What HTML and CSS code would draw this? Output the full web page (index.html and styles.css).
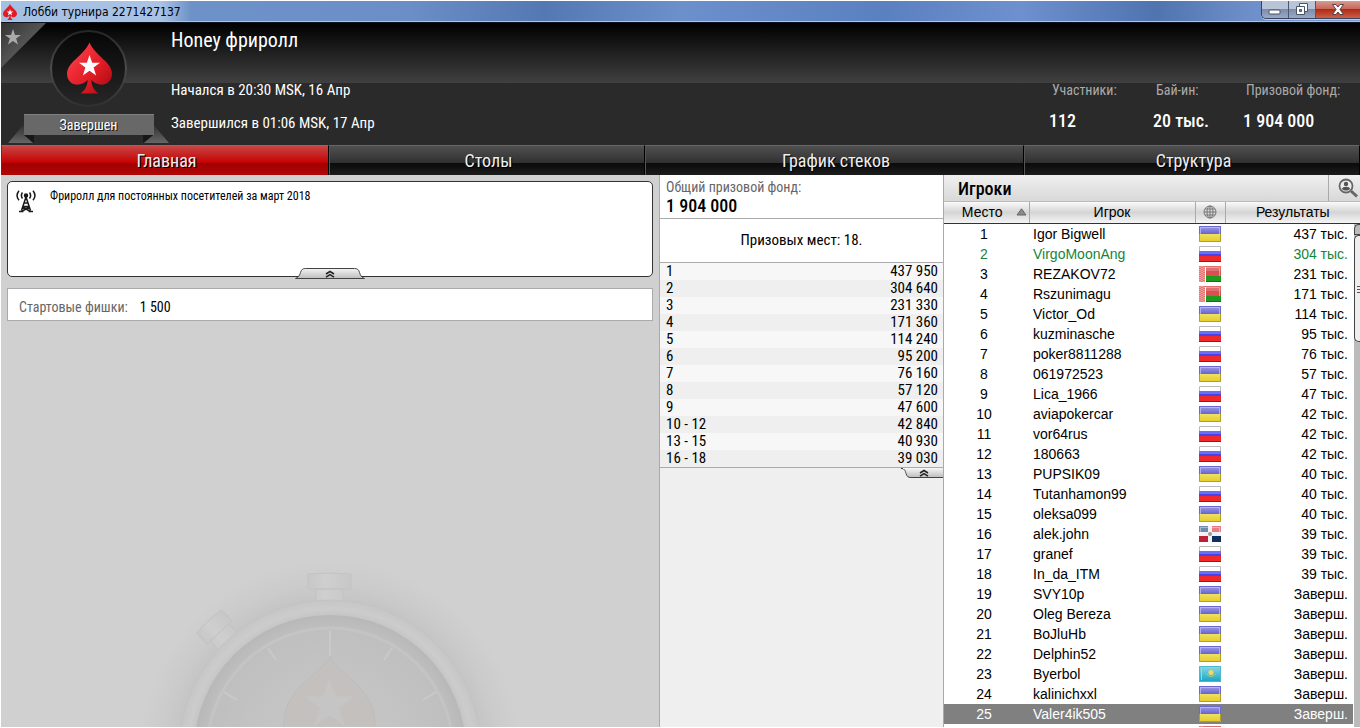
FILE: index.html
```html
<!DOCTYPE html>
<html lang="ru">
<head>
<meta charset="utf-8">
<title>Лобби турнира 2271427137</title>
<link rel="stylesheet" href="styles.css">
</head>
<body>
<svg class="defs" aria-hidden="true">
  <defs>
    <linearGradient id="gRed" x1="0" y1="0" x2="1" y2="1"><stop offset="0" stop-color="#ff7a6e"/><stop offset=".3" stop-color="#f0303a"/><stop offset=".6" stop-color="#e01b24"/><stop offset="1" stop-color="#a00910"/></linearGradient>
    <linearGradient id="gBlue" x1="0" y1="0" x2="0" y2="1"><stop offset="0" stop-color="#a09ee8"/><stop offset="1" stop-color="#6663cf"/></linearGradient>
    <linearGradient id="gYellow" x1="0" y1="0" x2="0" y2="1"><stop offset="0" stop-color="#efe067"/><stop offset="1" stop-color="#e3cb22"/></linearGradient>
    <linearGradient id="gSky" x1="0" y1="0" x2="0" y2="1"><stop offset="0" stop-color="#8fd8e6"/><stop offset="1" stop-color="#12a3c4"/></linearGradient>
    <symbol id="spade" viewBox="0 0 46 52"><path d="M23 0c3 7 9 12 14 17 6 5 9 10 9 15 0 6-4 11-10 11-5 0-9-2-11-5 0 6 2 10 7 14H14c5-4 7-8 7-14-2 3-6 5-11 5C4 43 0 38 0 32c0-5 3-10 9-15C14 12 20 7 23 0z"/></symbol>
    <symbol id="star" viewBox="0 0 20 20"><path d="M10 0l2.500 7.400H20l-6.100 4.500 2.400 7.600L10 14.900l-6.300 4.600 2.400-7.600L0 7.400h7.500z"/></symbol>
    <symbol id="ua" viewBox="0 0 22 16"><path fill="url(#gBlue)" d="M0 0h22v8H0z"/><path fill="url(#gYellow)" d="M0 8h22v8H0z"/><path fill="none" stroke="#6a67d0" d="M.5 8V.5h21V8"/><path fill="none" stroke="#b4a01c" d="M.5 8v7.500h21V8"/><path fill="none" stroke="#c6c5f2" stroke-opacity=".7" d="M1.500 8V1.500h19V8"/></symbol>
    <symbol id="ru" viewBox="0 0 22 16"><path fill="#fff" d="M0 0h22v5H0z"/><path fill="#6f6df5" d="M0 5h22v3H0z"/><path fill="#4543ec" d="M0 8h22v2H0z"/><path fill="#f02a2a" d="M0 10h22v5H0z"/><path fill="#b50d0d" d="M0 15h22v1H0z"/><path fill="none" stroke="#bbb" d="M.5 5V.5h21V5"/></symbol>
    <symbol id="by" viewBox="0 0 22 16"><path fill="#e07070" d="M0 0h22v10H0z"/><path fill="#d85050" d="M7 5h15v5H7z"/><path fill="#1f9a1f" d="M7 10h15v6H7z"/><path fill="#0d760d" d="M7 15h15v1H7z"/><path fill="#eda0a0" d="M0 0h6v16H0z"/><path stroke="#dc4a4a" stroke-dasharray="1 1" d="M1 0v16M3 1v15M5 0v16"/><path fill="#fff" d="M6 1h1v14H6z"/><path fill="none" stroke="#f0b5b5" stroke-opacity=".7" d="M7 1.500h13.500V10"/></symbol>
    <symbol id="do" viewBox="0 0 22 16"><path fill="#f2f2f2" d="M0 0h22v16H0z"/><path fill="#7288aa" d="M0 0h9v6H0z"/><path fill="#e77c88" d="M13 0h9v6h-9z"/><path fill="#bf2035" d="M0 10h9v6H0z"/><path fill="#0f3061" d="M13 10h9v6h-9z"/><circle cx="11" cy="8" r="2" fill="#9a9a9a"/><path fill="none" stroke="#fff" stroke-opacity=".4" d="M1.500 8V1.500h19V8"/></symbol>
    <symbol id="kz" viewBox="0 0 22 16"><path fill="url(#gSky)" d="M0 0h22v16H0z"/><path fill="#b8d48c" d="M2 2h1v12H2z"/><circle cx="12" cy="6.500" r="2.500" fill="#f5d860"/><path fill="none" stroke="#b9cf6e" d="M8 8c1 3 7 3 8 0"/><path fill="none" stroke="#4db7cb" d="M.5.500h21v15H.5z"/></symbol>
    <symbol id="chev" viewBox="0 0 10 8"><path fill="none" stroke="#222" stroke-width="1.500" d="M1 4l4-2.500L9 4M1 7.200l4-2.500 4 2.500"/></symbol>
    <linearGradient id="gHandle" x1="0" y1="0" x2="0" y2="1"><stop offset="0" stop-color="#f4f4f4"/><stop offset="1" stop-color="#bdbdbd"/></linearGradient>
  </defs>
</svg>
<div class="app">
  <div class="titlebar">
    <svg class="titlebar-icon" viewBox="0 0 46 52"><use href="#spade" fill="#e01b24"/><use href="#star" x="12" y="16" width="22" height="22" fill="#fff"/></svg>
    <span class="titlebar-text">Лобби турнира 2271427137</span>
    <div class="win-buttons">
      <button class="win-btn" aria-label="Свернуть"><svg width="14" height="6" viewBox="0 0 14 6"><rect x="1" y="1" width="11" height="4" rx="1" fill="#fff" stroke="#4b5563"/></svg></button>
      <button class="win-btn" aria-label="Развернуть"><svg width="12" height="13" viewBox="0 0 12 13"><path d="M3.500 3V.500h8v8H9" fill="#fff" stroke="#4b5568"/><path d="M.500 3.500h8v8h-8z" fill="#fff" stroke="#4b5568"/><path d="M3.500 6.500h2v2h-2z" fill="#7a8aa5" stroke="#4b5568"/></svg></button>
      <button class="win-btn win-close" aria-label="Закрыть"><svg width="12" height="11" viewBox="0 0 12 11"><path d="M.500.500h3.500l2 2.500 2-2.500h3.500L8 5.500l3.500 5H8L6 8l-2 2.500H.500L4 5.500z" fill="#fff" stroke="#5b4146"/></svg></button>
    </div>
  </div>

  <header class="header">
    <div class="brand">
      <svg class="brand-art" width="170" height="122" viewBox="1 23 170 122" aria-hidden="true">
        <defs>
          <linearGradient id="gCorner" x1="0" y1="0" x2="1" y2="1"><stop offset="0" stop-color="#333"/><stop offset=".5" stop-color="#555"/></linearGradient>
          <linearGradient id="gTail" x1="0" y1="0" x2="0" y2="1"><stop offset="0" stop-color="#2c2c2c"/><stop offset="1" stop-color="#666"/></linearGradient>
          <linearGradient id="gRing" x1="0" y1="0" x2="0" y2="1"><stop offset="0" stop-color="#262626"/><stop offset=".5" stop-color="#4c4c4c"/><stop offset="1" stop-color="#303030"/></linearGradient>
          <linearGradient id="gDisc" x1="0" y1="0" x2="0" y2="1"><stop offset="0" stop-color="#060606"/><stop offset="1" stop-color="#272727"/></linearGradient>
        </defs>
        <path fill="url(#gCorner)" d="M1 23h45L1 68z"/>
        <use href="#star" x="5" y="29" width="16" height="16" fill="#aaa"/>
        <circle cx="88.500" cy="68.500" r="37.500" fill="url(#gDisc)" stroke="url(#gRing)" stroke-width="2"/>
        <use href="#spade" x="67" y="42" width="45" height="52" fill="url(#gRed)"/>
        <use href="#star" x="79" y="55" width="21" height="21" fill="#fff"/>
        <path fill="url(#gTail)" d="M24 124v11l9 8H8zM153 124v11l-9 8h25z"/>
        <path fill="#171717" d="M24 135h10v8zM153 135h-10v8z"/>
        <path fill="#686868" d="M24 114h130v21H24z"/>
        <path fill="#808080" d="M24 114h130v1H24z"/>
      </svg>
      <span class="status">Завершен</span>
    </div>
    <div class="heading">
      <h1 class="name">Honey фриролл</h1>
      <p class="time">Начался в 20:30 MSK, 16 Апр</p>
      <p class="time">Завершился в 01:06 MSK, 17 Апр</p>
    </div>
    <dl class="stats">
      <div class="stat stat-players"><dt>Участники:</dt><dd>112</dd></div>
      <div class="stat stat-buyin"><dt>Бай-ин:</dt><dd>20 тыс.</dd></div>
      <div class="stat stat-prize"><dt>Призовой фонд:</dt><dd>1 904 000</dd></div>
    </dl>
  </header>

  <nav class="tabs">
    <button class="tab tab-active">Главная</button>
    <button class="tab">Столы</button>
    <button class="tab">График стеков</button>
    <button class="tab">Структура</button>
  </nav>

  <main class="body">
    <section class="main-col">
      <div class="info">
        <svg class="info-icon" width="20" height="23" viewBox="0 0 20 23" fill="none" stroke="#1a1a1a" stroke-width="1.500" aria-hidden="true"><path d="M10 7L5.500 20.500M10 7l4.500 13.500M8 13h4M7 16.500h6M3 21.500h4.500M12.500 21.500H17M7 17l6.500 4M13 17l-6.500 4"/><circle cx="10" cy="5.500" r="1.500" fill="#1a1a1a"/><path d="M6.500 2.500c-1.500 2-1.500 4 0 6M13.500 2.500c1.500 2 1.500 4 0 6M3 .800c-2.500 3-2.500 6.400 0 9.400M17 .800c2.500 3 2.500 6.400 0 9.400"/></svg>
        <p class="info-text">Фриролл для постоянных посетителей за март 2018</p>
        <button class="info-handle" aria-label="Свернуть описание"><svg width="70" height="11" viewBox="0 0 70 11"><path fill="url(#gHandle)" stroke="#444" d="M.500 10.500c3-1 4-3 5-6 1-3 2-4 5-4h49c3 0 4 1 5 4 1 3 2 5 5 6z"/><use href="#chev" x="30" y="2" width="10" height="8"/></svg></button>
      </div>
      <div class="chips"><span class="chips-label">Стартовые фишки:</span><span>1 500</span></div>
      <svg class="watch" width="400" height="190" viewBox="131 537 400 190" aria-hidden="true">
        <defs>
          <radialGradient id="gGlow" gradientUnits="userSpaceOnUse" cx="331" cy="751" r="190"><stop offset=".78" stop-color="#c4c4c4"/><stop offset=".88" stop-color="#cbcbcb"/><stop offset="1" stop-color="#d0d0d0"/></radialGradient>
          <radialGradient id="gRim" gradientUnits="userSpaceOnUse" cx="331" cy="751" r="151"><stop offset=".89" stop-color="#c4c4c4"/><stop offset=".94" stop-color="#cccccc"/><stop offset="1" stop-color="#c6c6c6"/></radialGradient>
          <radialGradient id="gFace" gradientUnits="userSpaceOnUse" cx="331" cy="751" r="136"><stop offset=".5" stop-color="#c4c4c4"/><stop offset=".9" stop-color="#bfbfbf"/><stop offset="1" stop-color="#b8b8b8"/></radialGradient>
          <linearGradient id="gCap"><stop offset="0" stop-color="#c7c7c7"/><stop offset=".4" stop-color="#cfcfcf"/><stop offset="1" stop-color="#c7c7c7"/></linearGradient>
        </defs>
        <circle cx="331" cy="751" r="190" fill="url(#gGlow)"/>
        <g fill="url(#gCap)" stroke="#c3c3c3">
          <path d="M317 589h27v13h-27zM309 574q22-2 43 0v15h-43z"/>
          <path transform="rotate(-43 331 751)" d="M318 589h26v13h-26zM314 574q17-2 34 0v15h-34z"/>
        </g>
        <circle cx="331" cy="751" r="151" fill="url(#gRim)" stroke="#c3c3c3"/>
        <circle cx="331" cy="751" r="136" fill="url(#gFace)"/>
        <circle cx="331" cy="751" r="123" fill="none" stroke="#c4c4c4" stroke-width="3"/>
        <path stroke="#c9c9c9" stroke-width="2" d="M331 631v25M269 648l8 12M393 648l-8 12M225 692l13 8M437 692l-13 8"/>
        <path fill="#c3c0be" stroke="#bdbdbd" d="M331 657c-9 17-46 31-46 66v10h91v-10c0-35-37-49-45-66z"/>
        <use href="#star" x="305" y="678" width="51" height="50" fill="#c5c5c5"/>
      </svg>
    </section>

    <section class="prizes">
      <div class="prize-total"><p class="prize-label">Общий призовой фонд:</p><p class="prize-value">1 904 000</p></div>
      <p class="prize-places">Призовых мест: 18.</p>
      <table class="prize-table">
        <tr><td>1</td><td>437 950</td></tr>
        <tr><td>2</td><td>304 640</td></tr>
        <tr><td>3</td><td>231 330</td></tr>
        <tr><td>4</td><td>171 360</td></tr>
        <tr><td>5</td><td>114 240</td></tr>
        <tr><td>6</td><td>95 200</td></tr>
        <tr><td>7</td><td>76 160</td></tr>
        <tr><td>8</td><td>57 120</td></tr>
        <tr><td>9</td><td>47 600</td></tr>
        <tr><td>10 - 12</td><td>42 840</td></tr>
        <tr><td>13 - 15</td><td>40 930</td></tr>
        <tr><td>16 - 18</td><td>39 030</td></tr>
      </table>
      <button class="prize-handle" aria-label="Свернуть призы"><svg width="42" height="11" viewBox="0 0 42 11"><path fill="url(#gHandle)" stroke="#444" d="M0 .500c4 0 4 2 5 5s2 4 5 4h33v-9z"/><path fill="#f4f4f4" d="M2 0h40v1H2z"/><use href="#chev" x="18" y="1" width="10" height="8"/></svg></button>
    </section>

    <section class="players">
      <div class="players-bar">
        <h2 class="players-title">Игроки</h2>
        <button class="search" aria-label="Найти игрока"><svg width="21" height="20" viewBox="0 0 21 20"><circle cx="8" cy="8" r="6.500" fill="#eee" stroke="#666" stroke-width="1.800"/><circle cx="8" cy="6" r="2.200" fill="#555"/><path fill="#555" d="M4 11c0-3 8-3 8 0-2 2-6 2-8 0z"/><path stroke="#666" stroke-width="3" d="M13 13l6 5.500"/></svg></button>
      </div>
      <div class="players-list">
        <table class="players-table">
          <colgroup><col class="c-place"><col class="c-name"><col class="c-flag"><col></colgroup>
          <thead><tr>
            <th><span class="sort">Место<svg width="11" height="8" viewBox="0 0 11 8"><path fill="#8a8a8a" stroke="#666" d="M5.500.800L10 7H1z"/></svg></span></th>
            <th>Игрок</th>
            <th><svg class="globe" width="14" height="14" viewBox="0 0 14 14" fill="none" stroke="#777" aria-label="Страна"><circle cx="7" cy="7" r="6"/><path d="M7 1v12M1 7h12M2 4h10M2 10h10"/><ellipse cx="7" cy="7" rx="3" ry="6"/></svg></th>
            <th>Результаты</th>
          </tr></thead>
          <tbody>
            <tr><td>1</td><td>Igor Bigwell</td><td><svg class="flag"><use href="#ua"/></svg></td><td>437 тыс.</td></tr>
            <tr class="row-own"><td>2</td><td>VirgoMoonAng</td><td><svg class="flag"><use href="#ru"/></svg></td><td>304 тыс.</td></tr>
            <tr><td>3</td><td>REZAKOV72</td><td><svg class="flag"><use href="#by"/></svg></td><td>231 тыс.</td></tr>
            <tr><td>4</td><td>Rszunimagu</td><td><svg class="flag"><use href="#by"/></svg></td><td>171 тыс.</td></tr>
            <tr><td>5</td><td>Victor_Od</td><td><svg class="flag"><use href="#ua"/></svg></td><td>114 тыс.</td></tr>
            <tr><td>6</td><td>kuzminasche</td><td><svg class="flag"><use href="#ru"/></svg></td><td>95 тыс.</td></tr>
            <tr><td>7</td><td>poker8811288</td><td><svg class="flag"><use href="#ru"/></svg></td><td>76 тыс.</td></tr>
            <tr><td>8</td><td>061972523</td><td><svg class="flag"><use href="#ua"/></svg></td><td>57 тыс.</td></tr>
            <tr><td>9</td><td>Lica_1966</td><td><svg class="flag"><use href="#ru"/></svg></td><td>47 тыс.</td></tr>
            <tr><td>10</td><td>aviapokercar</td><td><svg class="flag"><use href="#ua"/></svg></td><td>42 тыс.</td></tr>
            <tr><td>11</td><td>vor64rus</td><td><svg class="flag"><use href="#ru"/></svg></td><td>42 тыс.</td></tr>
            <tr><td>12</td><td>180663</td><td><svg class="flag"><use href="#ru"/></svg></td><td>42 тыс.</td></tr>
            <tr><td>13</td><td>PUPSIK09</td><td><svg class="flag"><use href="#ua"/></svg></td><td>40 тыс.</td></tr>
            <tr><td>14</td><td>Tutanhamon99</td><td><svg class="flag"><use href="#ru"/></svg></td><td>40 тыс.</td></tr>
            <tr><td>15</td><td>oleksa099</td><td><svg class="flag"><use href="#ua"/></svg></td><td>40 тыс.</td></tr>
            <tr><td>16</td><td>alek.john</td><td><svg class="flag"><use href="#do"/></svg></td><td>39 тыс.</td></tr>
            <tr><td>17</td><td>granef</td><td><svg class="flag"><use href="#ru"/></svg></td><td>39 тыс.</td></tr>
            <tr><td>18</td><td>In_da_ITM</td><td><svg class="flag"><use href="#ru"/></svg></td><td>39 тыс.</td></tr>
            <tr><td>19</td><td>SVY10p</td><td><svg class="flag"><use href="#ua"/></svg></td><td>Заверш.</td></tr>
            <tr><td>20</td><td>Oleg Bereza</td><td><svg class="flag"><use href="#ua"/></svg></td><td>Заверш.</td></tr>
            <tr><td>21</td><td>BoJluHb</td><td><svg class="flag"><use href="#ua"/></svg></td><td>Заверш.</td></tr>
            <tr><td>22</td><td>Delphin52</td><td><svg class="flag"><use href="#ua"/></svg></td><td>Заверш.</td></tr>
            <tr><td>23</td><td>Byerbol</td><td><svg class="flag"><use href="#kz"/></svg></td><td>Заверш.</td></tr>
            <tr><td>24</td><td>kalinichxxl</td><td><svg class="flag"><use href="#ua"/></svg></td><td>Заверш.</td></tr>
            <tr class="row-selected"><td>25</td><td>Valer4ik505</td><td><svg class="flag"><use href="#ua"/></svg></td><td>Заверш.</td></tr>
            <tr><td></td><td></td><td><svg class="flag"><use href="#by"/></svg></td><td></td></tr>
          </tbody>
        </table>
        <div class="scroll"><div class="scroll-up"></div><div class="scroll-thumb"></div></div>
      </div>
    </section>
  </main>
</div>
</body>
</html>
```
FILE: styles.css
```css
* { box-sizing: border-box; }
body, h1, h2, p, dl, dd { margin: 0; }
body {
  background: #fff;
  color: #000;
  font-family: "Roboto Condensed", "Liberation Sans", sans-serif;
  font-size: 15px;
  line-height: 20px;
}
button { margin: 0; padding: 0; border: 0; background: none; font: inherit; color: inherit; }
svg { display: block; }
table { border-collapse: collapse; width: 100%; }
td, th { padding: 0; font-weight: 400; }
.defs { position: absolute; width: 0; height: 0; }

.app { display: flex; flex-direction: column; height: 100vh; padding: 1px 0 1px 1px; overflow: hidden; }

.titlebar {
  display: flex;
  flex: none;
  gap: 6px;
  height: 22px;
  padding-left: 2px;
  border-bottom: 1px solid #0c1422;
  box-shadow: inset 0 -1px #a9c3ea;
  background: linear-gradient(90deg, #a5bfe2 0, #a9c3e6 160px, #6d92c8 190px, #6b8ec6 30%, #5478b4 40%, #6c90cc 50%, #5b80c0 65%, #6e90ce 75%, #4f74b0 85%, #6f8fca 92%, #7d9bd0 100%);
}
.titlebar-icon { width: 14px; height: 16px; margin-top: 3px; }
.titlebar-text { flex: 1; font-family: "DejaVu Sans Condensed", "DejaVu Sans", sans-serif; font-size: 12px; line-height: 22px; }
.win-buttons {
  display: grid;
  grid-template-columns: 27px 27px 44px;
  height: 18px;
  border: 1px solid #39455c;
  border-width: 0 0 1px 1px;
  border-radius: 0 0 0 5px;
  overflow: hidden;
  box-shadow: 0 1px #b9cdec;
}
.win-btn { display: grid; place-items: center; border-right: 1px solid #4a5873; background: linear-gradient(#b9c4d8 0 45%, #7f8ca6 50%, #98a9cc); }
.win-btn:first-child { align-items: end; padding-bottom: 3px; }
.win-close { border-right: 0; background: linear-gradient(#d69a92 0, #c8685a 45%, #b02a17 50%, #cc6046); }

.header { display: flex; flex: none; height: 122px; background: linear-gradient(#000, #404040 60px, #2a2a2a 60px); color: #fff; }
.brand { display: grid; flex: none; width: 170px; }
.brand-art, .status { grid-area: 1 / 1; }
.status { padding: 91px 0 0 5px; font-size: 14px; line-height: 22px; text-align: center; text-shadow: 1px 1px #111; }
.heading { flex: 1; padding-top: 3px; }
.name { font-size: 20px; font-weight: 400; line-height: 28px; margin-bottom: 26px; }
.time { margin-bottom: 13px; }
.stats { display: flex; padding-top: 57px; }
.stat dt { padding-left: 3px; color: #aaa; font-size: 14px; }
.stat dd { margin-top: 10px; font-size: 18px; font-weight: 500; line-height: 22px; }
.stat-players { width: 104px; }
.stat-buyin { width: 90px; }
.stat-prize { width: 117px; }

.tabs { display: grid; flex: none; grid-template-columns: 328fr 316fr 379fr 336fr; height: 30px; background: #111; }
.tab {
  padding-left: 3px;
  border-top: 1px solid #666;
  border-left: 1px solid #555;
  border-right: 1px solid #000;
  background: linear-gradient(#505050, #303030 17px, #0a0a0a 17px, #1c1c1c);
  color: #eee;
  font-size: 18px;
  line-height: 28px;
  text-shadow: 1px 1px #000;
}
.tab-active { border-top-color: #d05050; border-left-color: #c00; background: linear-gradient(#c84545, #c40000 17px, #a00000 17px, #b00808); }

.body { display: grid; flex: 1; min-height: 0; grid-template-columns: 658fr 285fr 416fr; }
.main-col { display: flex; flex-direction: column; min-height: 0; padding: 6px 6px 0; background: #d0d0d0; overflow: hidden; }
.info { position: relative; display: flex; flex: none; gap: 14px; min-height: 96px; padding: 8px; border: 1px solid #333; border-radius: 5px; background: #fff; }
.info-text { font-size: 12px; line-height: 12px; }
.info-handle { position: absolute; bottom: -3px; left: 50%; margin-left: -35px; }
.chips { display: flex; gap: 12px; margin-top: 11px; padding: 10px 11px 5px; border: 1px solid #aaa; background: #fff; font-size: 14px; line-height: 16px; }
.chips-label { color: #666; }
.watch { flex: none; align-self: center; margin-top: auto; }

.prizes { border: 1px solid #aaa; border-width: 0 1px; background: #efefef; }
.prize-total { padding: 3px 6px 2px; border-bottom: 1px solid #aaa; background: #fff; }
.prize-label { color: #666; font-size: 14px; line-height: 18px; }
.prize-value { font-size: 18px; font-weight: 500; line-height: 20px; }
.prize-places { padding: 11px 0 12px; border-bottom: 1px solid #aaa; background: #fff; text-align: center; }
.prize-table { border-bottom: 1px solid #aaa; }
.prize-table tr { background: #efefef; }
.prize-table tr:nth-child(odd) { background: #f7f7f7; }
.prize-table td { height: 17px; padding-left: 6px; line-height: 17px; }
.prize-table td:last-child { padding-right: 5px; text-align: right; }
.prize-handle { display: block; margin-left: auto; }

.players { display: flex; flex-direction: column; min-height: 0; background: #fff; font-family: "Liberation Sans", Arial, sans-serif; font-size: 14px; }
.players-bar { display: flex; flex: none; height: 27px; border-bottom: 1px solid #bbb; background: linear-gradient(#f0f0f0, #d8d8d8); }
.players-title { flex: 1; padding-left: 14px; font-family: "Roboto Condensed", sans-serif; font-size: 18px; font-weight: 500; line-height: 27px; }
.search { width: 32px; padding: 0 0 0 9px; border-left: 1px solid #aaa; }
.players-list { position: relative; flex: 1; min-height: 0; overflow: hidden; }
.players-table { table-layout: fixed; }
.c-place { width: 85px; }
.c-name { width: 166px; }
.c-flag { width: 30px; }
.players-table th { height: 21px; border-right: 1px solid #aaa; border-bottom: 1px solid #333; background: linear-gradient(#fafafa, #d4d4d4 50%, #d8d8d8 55%, #f4f4f4); line-height: 20px; text-align: center; }
.players-table th:last-child { border-right: 0; }
.sort { display: flex; align-items: center; justify-content: flex-end; gap: 13px; padding-right: 2px; }
.globe { margin: auto; }
.players-table td { height: 20px; line-height: 20px; }
.players-table td:first-child { padding-right: 5px; text-align: center; }
.players-table td:nth-child(2) { padding-left: 4px; }
.players-table td:last-child { padding-right: 12px; text-align: right; }
.flag { width: 22px; height: 16px; margin: 0 auto; }
.row-own { color: #14843c; }
.row-selected { background: #808080; color: #fff; }

.scroll { position: absolute; top: 22px; right: 0; bottom: 0; width: 7px; border-left: 1px solid #fff; background: #bbb; }
.scroll-up { height: 11px; border: 1px solid #444; border-right: 0; border-radius: 5px 0 0 0; background: #bbb; }
.scroll-thumb { height: 107px; border: 1px solid #444; border-right: 0; border-radius: 5px 0 0 5px; background: linear-gradient(#555, #555) 2px 50px / 4px 1px no-repeat, linear-gradient(#555, #555) 2px 53px / 4px 1px no-repeat, linear-gradient(#555, #555) 2px 56px / 4px 1px no-repeat, #eee; }
```
